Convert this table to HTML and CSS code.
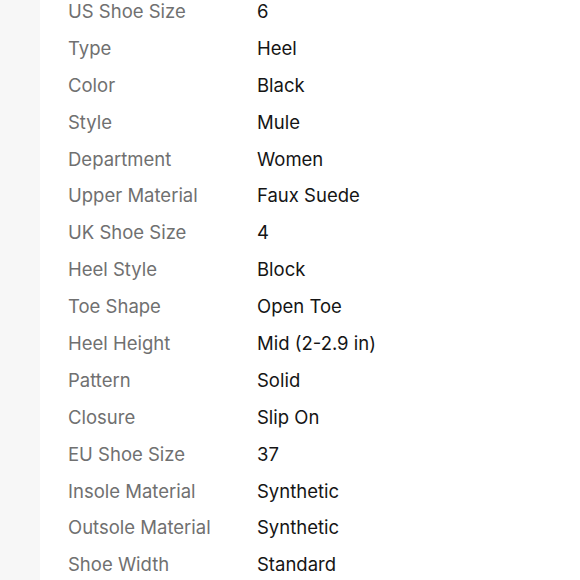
FILE: index.html
```html
<!DOCTYPE html>
<html>
<head>
<meta charset="utf-8">
<link rel="stylesheet" href="styles.css">
</head>
<body>
<div class="page">
  <div class="side"></div>
  <dl class="specs">
    <dt>US Shoe Size</dt><dd>6</dd>
    <dt>Type</dt><dd>Heel</dd>
    <dt>Color</dt><dd>Black</dd>
    <dt>Style</dt><dd>Mule</dd>
    <dt>Department</dt><dd>Women</dd>
    <dt>Upper Material</dt><dd>Faux Suede</dd>
    <dt>UK Shoe Size</dt><dd>4</dd>
    <dt>Heel Style</dt><dd>Block</dd>
    <dt>Toe Shape</dt><dd>Open Toe</dd>
    <dt>Heel Height</dt><dd>Mid (2-2.9 in)</dd>
    <dt>Pattern</dt><dd>Solid</dd>
    <dt>Closure</dt><dd>Slip On</dd>
    <dt>EU Shoe Size</dt><dd>37</dd>
    <dt>Insole Material</dt><dd>Synthetic</dd>
    <dt>Outsole Material</dt><dd>Synthetic</dd>
    <dt>Shoe Width</dt><dd>Standard</dd>
  </dl>
</div>
</body>
</html>
```
FILE: styles.css
```css
html, body {
  margin: 0;
  padding: 0;
  background: #ffffff;
  overflow: hidden;
}
.page {
  display: flex;
  height: 580px;
  overflow: hidden;
}
.side {
  width: 40px;
  flex: none;
  background: #f7f7f7;
}
.specs {
  display: grid;
  grid-template-columns: 189px auto;
  grid-auto-rows: 36.9px;
  align-content: start;
  align-items: center;
  margin: -7.5px 0 0 0;
  padding-left: 28px;
  font-family: Inter, "Liberation Sans", sans-serif;
  font-size: 18.5px;
}
.specs dt {
  color: #707070;
  margin: 0;
}
.specs dd {
  color: #151515;
  margin: 0;
}
```
